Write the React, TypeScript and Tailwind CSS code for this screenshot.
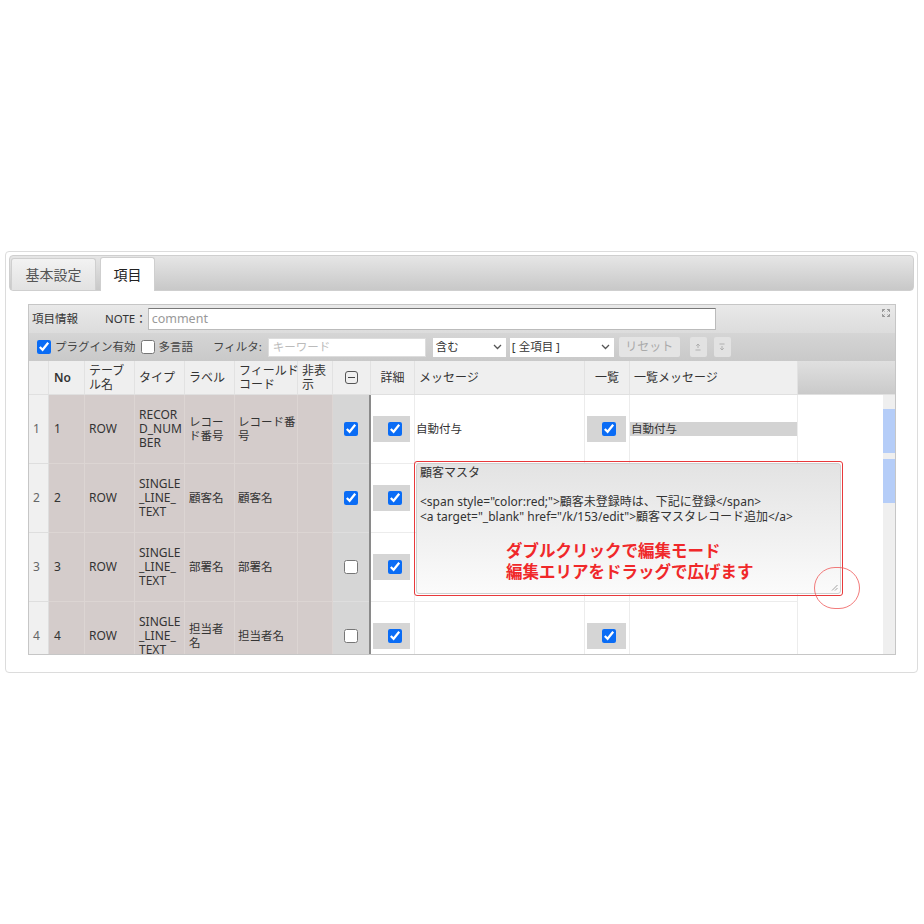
import React from "react";

type Row = {
  n: number;
  type: string[];
  label: string[];
  code: string[];
  hide: boolean;
  detail: boolean;
  msg: string;
  list: boolean;
  listMsg: string;
};

const rows: Row[] = [
  { n: 1, type: ["RECOR", "D_NUM", "BER"], label: ["レコー", "ド番号"], code: ["レコード番", "号"], hide: true, detail: true, msg: "自動付与", list: true, listMsg: "自動付与" },
  { n: 2, type: ["SINGLE", "_LINE_", "TEXT"], label: ["顧客名"], code: ["顧客名"], hide: true, detail: true, msg: "", list: true, listMsg: "" },
  { n: 3, type: ["SINGLE", "_LINE_", "TEXT"], label: ["部署名"], code: ["部署名"], hide: false, detail: true, msg: "", list: true, listMsg: "" },
  { n: 4, type: ["SINGLE", "_LINE_", "TEXT"], label: ["担当者", "名"], code: ["担当者名"], hide: false, detail: true, msg: "", list: true, listMsg: "" },
];

const Lines = ({ lines }: { lines: string[] }) => (
  <div className="flex flex-col whitespace-nowrap">
    {lines.map((l, i) => (
      <span key={i} className="block h-[14px]">{l}</span>
    ))}
  </div>
);

const Check = ({ on }: { on: boolean }) => (
  <input type="checkbox" checked={on} readOnly className="m-0 h-[14px] w-[14px] accent-[#0a6cf5]" />
);

const Chevron = () => (
  <svg width="9" height="6" viewBox="0 0 9 6" className="text-[#555]">
    <path d="M1 1l3.5 3.5L8 1" fill="none" stroke="currentColor" strokeWidth="1.3" />
  </svg>
);

const ExpandIcon = () => (
  <svg width="8" height="8" viewBox="0 0 8 8" className="text-[#999]">
    <path d="M0.5 0.5h2.5M0.5 0.5v2.5M0.5 0.5l2 2M7.5 0.5h-2.5M7.5 0.5v2.5M7.5 0.5l-2 2M0.5 7.5h2.5M0.5 7.5v-2.5M0.5 7.5l2-2M7.5 7.5h-2.5M7.5 7.5v-2.5M7.5 7.5l-2-2" fill="none" stroke="currentColor" strokeWidth="1" />
  </svg>
);

const HeaderCell = ({ w, children, center }: { w: string; children?: React.ReactNode; center?: boolean }) => (
  <div className={`${w} flex h-full shrink-0 items-center border-r border-[#e2e2e2] ${center ? "justify-center" : "pl-[4px]"}`}>
    {children}
  </div>
);

export default function App() {
  return (
    <div className="min-h-screen bg-white pt-[251px] font-['Noto_Sans','Noto_Sans_CJK_JP',sans-serif] text-[11.5px] leading-[14px] text-[#333]">
      <div className="ml-[5px] h-[422px] w-[913px] rounded-[4px] border border-[#dcdcdc] p-[3px]">
        {/* tabs */}
        <div className="flex h-[36px] items-end rounded-[4px] border border-[#cfcfcf] bg-gradient-to-b from-[#e6e6e6] to-[#c8c8c8] pl-[1px]">
          <div className="flex h-[32px] w-[85px] items-center justify-center rounded-t-[3px] border border-b-0 border-[#cfcfcf] bg-gradient-to-b from-[#f2f2f2] to-[#e2e2e2] text-[14px] text-[#555]">
            基本設定
          </div>
          <div className="relative top-[1px] ml-[4px] flex h-[34px] w-[55px] items-center justify-center rounded-t-[3px] border border-b-0 border-[#cfcfcf] bg-white text-[14px] text-[#222]">
            項目
          </div>
        </div>

        {/* grid panel */}
        <div className="ml-[19px] mt-[13px] flex h-[351px] w-[868px] flex-col overflow-hidden border border-[#c6c6c6]">
          {/* caption */}
          <div className="flex h-[28px] shrink-0 items-center bg-gradient-to-b from-[#e9e9e9] to-[#dcdcdc] pl-[3px]">
            <span>項目情報</span>
            <span className="ml-[27px]">NOTE：</span>
            <div className="ml-[1px] flex h-[22px] w-[568px] items-center border border-[#bbb] border-t-[#777] bg-white pl-[3px] text-[12.5px] text-[#999]">
              comment
            </div>
            <div className="ml-auto mr-[5px] self-start pt-[4px]">
              <ExpandIcon />
            </div>
          </div>

          {/* toolbar */}
          <div className="flex h-[28px] shrink-0 items-center bg-gradient-to-b from-[#d5d5d5] to-[#c9c9c9] pl-[8px]">
            <Check on={true} />
            <span className="ml-[4px] text-[#444]">プラグイン有効</span>
            <input type="checkbox" readOnly checked={false} className="m-0 ml-[5px] h-[14px] w-[14px]" />
            <span className="ml-[4px] text-[#444]">多言語</span>
            <span className="ml-[20px] text-[#444]">フィルタ:</span>
            <div className="ml-[6px] flex h-[19px] w-[158px] items-center border border-[#ddd] bg-white pl-[4px] text-[#bbb]">キーワード</div>
            <div className="ml-[7px] flex h-[19px] w-[73px] items-center justify-between bg-white pl-[3px] pr-[4px]">
              <span>含む</span>
              <Chevron />
            </div>
            <div className="ml-[4px] flex h-[19px] w-[104px] items-center justify-between bg-white pl-[2px] pr-[4px]">
              <span>[ 全項目 ]</span>
              <Chevron />
            </div>
            <div className="ml-[5px] flex h-[20px] w-[61px] items-center justify-center rounded-[2px] bg-[#e4e4e4] text-[12px] text-[#aaa]">リセット</div>
            <div className="ml-[10px] flex h-[20px] w-[17px] items-center justify-center rounded-[2px] bg-[#e2e2e2]">
              <svg width="6" height="8" viewBox="0 0 6 8" className="text-[#aaa]">
                <path d="M3 1v4M1.2 2.8L3 1l1.8 1.8M0.5 7h5" fill="none" stroke="currentColor" strokeWidth="0.9" />
              </svg>
            </div>
            <div className="ml-[7px] flex h-[20px] w-[17px] items-center justify-center rounded-[2px] bg-[#e2e2e2]">
              <svg width="6" height="8" viewBox="0 0 6 8" className="text-[#aaa]">
                <path d="M0.5 1h5M3 3v4M1.2 5.2L3 7l1.8-1.8" fill="none" stroke="currentColor" strokeWidth="0.9" />
              </svg>
            </div>
          </div>

          {/* header */}
          <div className="flex h-[34px] shrink-0 border-b border-[#e0e0e0] bg-[#efefef] text-[12px]">
            <HeaderCell w="w-[20px]" />
            <HeaderCell w="w-[36px]"><span className="pl-[1px] font-semibold">No</span></HeaderCell>
            <HeaderCell w="w-[50px]"><Lines lines={["テーブ", "ル名"]} /></HeaderCell>
            <HeaderCell w="w-[50px]">タイプ</HeaderCell>
            <HeaderCell w="w-[50px]">ラベル</HeaderCell>
            <HeaderCell w="w-[63px]"><Lines lines={["フィールド", "コード"]} /></HeaderCell>
            <HeaderCell w="w-[35px]"><Lines lines={["非表", "示"]} /></HeaderCell>
            <HeaderCell w="w-[38px]" center>
              <div className="flex h-[13px] w-[13px] items-center justify-center rounded-[3px] border border-[#555]">
                <div className="h-[1.5px] w-[7px] bg-[#444]" />
              </div>
            </HeaderCell>
            <HeaderCell w="w-[44px]" center>詳細</HeaderCell>
            <HeaderCell w="w-[170px]">メッセージ</HeaderCell>
            <HeaderCell w="w-[45px]" center>一覧</HeaderCell>
            <HeaderCell w="w-[168px]">一覧メッセージ</HeaderCell>
            <div className="h-full flex-1 bg-gradient-to-b from-[#e0e0e0] to-[#cacaca]" />
          </div>

          {/* body */}
          <div className="relative flex min-h-0 flex-1 text-[12px]">
            <div className="flex flex-1 flex-col">
              {rows.map((r) => (
                <div key={r.n} className="flex h-[69px] shrink-0">
                  <div className="flex w-[20px] shrink-0 items-center border-b border-r border-[#dedede] bg-[#f0f0f0] pl-[4px] text-[#666]">{r.n}</div>
                  <div className="flex w-[36px] shrink-0 items-center border-b border-r border-[#dcd5d3] bg-[#d4cccb] pl-[5px]">{r.n}</div>
                  <div className="flex w-[50px] shrink-0 items-center border-b border-r border-[#dcd5d3] bg-[#d4cccb] pl-[4px]">ROW</div>
                  <div className="flex w-[50px] shrink-0 items-center border-b border-r border-[#dcd5d3] bg-[#d4cccb] pl-[4px]"><Lines lines={r.type} /></div>
                  <div className="flex w-[50px] shrink-0 items-center border-b border-r border-[#dcd5d3] bg-[#d4cccb] pl-[4px] text-[11.5px]"><Lines lines={r.label} /></div>
                  <div className="flex w-[63px] shrink-0 items-center border-b border-r border-[#dcd5d3] bg-[#d4cccb] pl-[3px] text-[11.5px]"><Lines lines={r.code} /></div>
                  <div className="w-[35px] shrink-0 border-b border-r border-[#dcd5d3] bg-[#d4cccb]" />
                  <div className="flex w-[36px] shrink-0 items-center justify-center border-b border-[#dedede] bg-[#d6d6d6]">
                    <Check on={r.hide} />
                  </div>
                  <div className="w-[2px] shrink-0 bg-[#8a8a8a]" />
                  <div className="flex w-[44px] shrink-0 items-center border-b border-r border-[#ececec] pl-[2px]">
                    <div className="flex h-[26px] w-[37px] items-center justify-end bg-[#d5d5d5] pr-[8px]">
                      <Check on={r.detail} />
                    </div>
                  </div>
                  <div className="flex w-[170px] shrink-0 items-center border-b border-r border-[#ececec] pl-[1px] text-[11.5px]">{r.msg}</div>
                  <div className="flex w-[45px] shrink-0 items-center border-b border-r border-[#ececec] pl-[2px]">
                    <div className="flex h-[26px] w-[39px] items-center justify-end bg-[#d5d5d5] pr-[10px]">
                      <Check on={r.list} />
                    </div>
                  </div>
                  <div className="flex w-[168px] shrink-0 items-center border-b border-r border-[#ececec] text-[11.5px]">
                    {r.listMsg && <div className="h-[14px] w-full bg-[#d3d3d3] pl-[1px]">{r.listMsg}</div>}
                  </div>
                  <div className="flex-1" />
                </div>
              ))}
            </div>
            {/* scrollbar */}
            <div className="flex w-[12px] shrink-0 flex-col bg-[#efefef] pt-[14px]">
              <div className="h-[44px] bg-[#b5cdf8]" />
              <div className="mt-[6px] h-[44px] bg-[#b5cdf8]" />
            </div>

            {/* editing textarea overlay */}
            <div className="absolute left-[385px] top-[66px] h-[135px] w-[429px] rounded-[3px] border-[1.5px] border-[#e8393b] p-[1px]">
              <div className="relative h-full w-full rounded-[3px] border border-[#cfcfcf] bg-gradient-to-b from-[#e3e3e3] to-[#fbfbfb] pl-[3px] pt-[2px] text-[12px] leading-[14.5px] text-[#333]">
                <div>顧客マスタ</div>
                <div>&nbsp;</div>
                <div className="whitespace-nowrap">&lt;span style="color:red;"&gt;顧客未登録時は、下記に登録&lt;/span&gt;</div>
                <div className="whitespace-nowrap">&lt;a target="_blank" href="/k/153/edit"&gt;顧客マスタレコード追加&lt;/a&gt;</div>
                <div className="ml-[86px] mt-[16px] text-[16.5px] font-bold leading-[21px] text-[#f0282a]">
                  <div>ダブルクリックで編集モード</div>
                  <div>編集エリアをドラッグで広げます</div>
                </div>
                <svg width="7" height="7" viewBox="0 0 7 7" className="absolute bottom-[2px] right-[2px] text-[#999]">
                  <path d="M6.5 1L1 6.5M6.5 4L4 6.5" fill="none" stroke="currentColor" strokeWidth="0.9" />
                </svg>
              </div>
            </div>
            {/* highlight circle */}
            <div className="absolute left-[785px] top-[172px] h-[42px] w-[46px] rounded-full border-[1.5px] border-[#ef5a5a]/80" />
          </div>
        </div>
      </div>
    </div>
  );
}
